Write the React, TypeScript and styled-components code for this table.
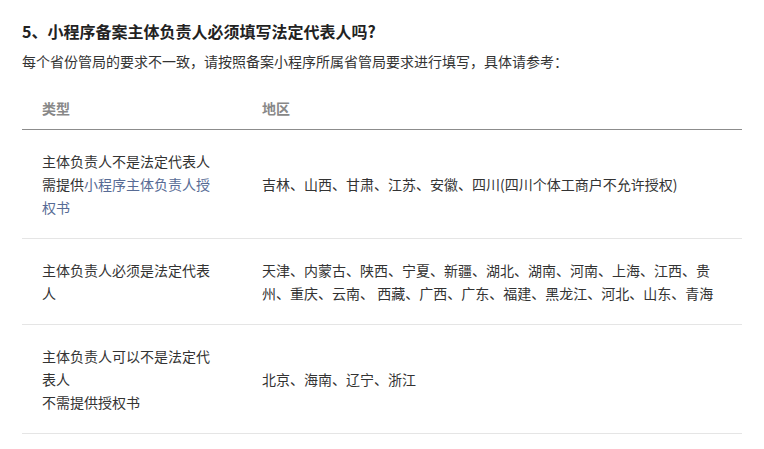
import styled, { createGlobalStyle } from "styled-components";

const GlobalStyle = createGlobalStyle`
  body {
    margin: 0;
    background: #fff;
    font-family: "Noto Sans CJK SC", "Noto Sans", sans-serif;
    color: #333;
  }
`;

const StyledPage = styled.div`
  padding: 19px 22px 20px;
`;

const StyledTitle = styled.h3`
  margin: 0;
  font-size: 16px;
  line-height: 24px;
  font-weight: 700;
  color: #222;
`;

const StyledDesc = styled.p`
  margin: 7px 0 0;
  font-size: 14px;
  line-height: 23px;
`;

const StyledTable = styled.table`
  margin-top: 14px;
  width: 720px;
  border-collapse: collapse;
  font-size: 14px;
  line-height: 23px;
  table-layout: fixed;
`;

const StyledHeadCell = styled.th<{ $width?: number }>`
  box-sizing: border-box;
  width: ${(p) => (p.$width ? `${p.$width}px` : "auto")};
  padding: 10px 20px 9px;
  text-align: left;
  font-weight: 700;
  color: #888;
  border-bottom: 1px solid #8c8c8c;
`;

const StyledRow = styled.tr`
  border-bottom: 1px solid #e5e5e5;
`;

const StyledCell = styled.td`
  padding: 19.5px 20px 19.5px;
  vertical-align: middle;
  color: #333;
  word-break: break-all;
`;

const StyledLink = styled.span`
  color: #576b95;
`;

const rows = [
  {
    type: (
      <>
        主体负责人不是法定代表人
        <br />
        需提供<StyledLink>小程序主体负责人授权书</StyledLink>
      </>
    ),
    area: "吉林、山西、甘肃、江苏、安徽、四川(四川个体工商户不允许授权)",
  },
  {
    type: <>主体负责人必须是法定代表人</>,
    area: "天津、内蒙古、陕西、宁夏、新疆、湖北、湖南、河南、上海、江西、贵州、重庆、云南、 西藏、广西、广东、福建、黑龙江、河北、山东、青海",
  },
  {
    type: (
      <>
        主体负责人可以不是法定代表人
        <br />
        不需提供授权书
      </>
    ),
    area: "北京、海南、辽宁、浙江",
  },
];

const App = () => {
  return (
    <>
      <GlobalStyle />
      <StyledPage>
        <StyledTitle>5、小程序备案主体负责人必须填写法定代表人吗?</StyledTitle>
        <StyledDesc>
          每个省份管局的要求不一致，请按照备案小程序所属省管局要求进行填写，具体请参考：
        </StyledDesc>
        <StyledTable>
          <thead>
            <tr>
              <StyledHeadCell $width={220}>类型</StyledHeadCell>
              <StyledHeadCell>地区</StyledHeadCell>
            </tr>
          </thead>
          <tbody>
            {rows.map((row, i) => (
              <StyledRow key={i}>
                <StyledCell>{row.type}</StyledCell>
                <StyledCell>{row.area}</StyledCell>
              </StyledRow>
            ))}
          </tbody>
        </StyledTable>
      </StyledPage>
    </>
  );
};

export default App;
